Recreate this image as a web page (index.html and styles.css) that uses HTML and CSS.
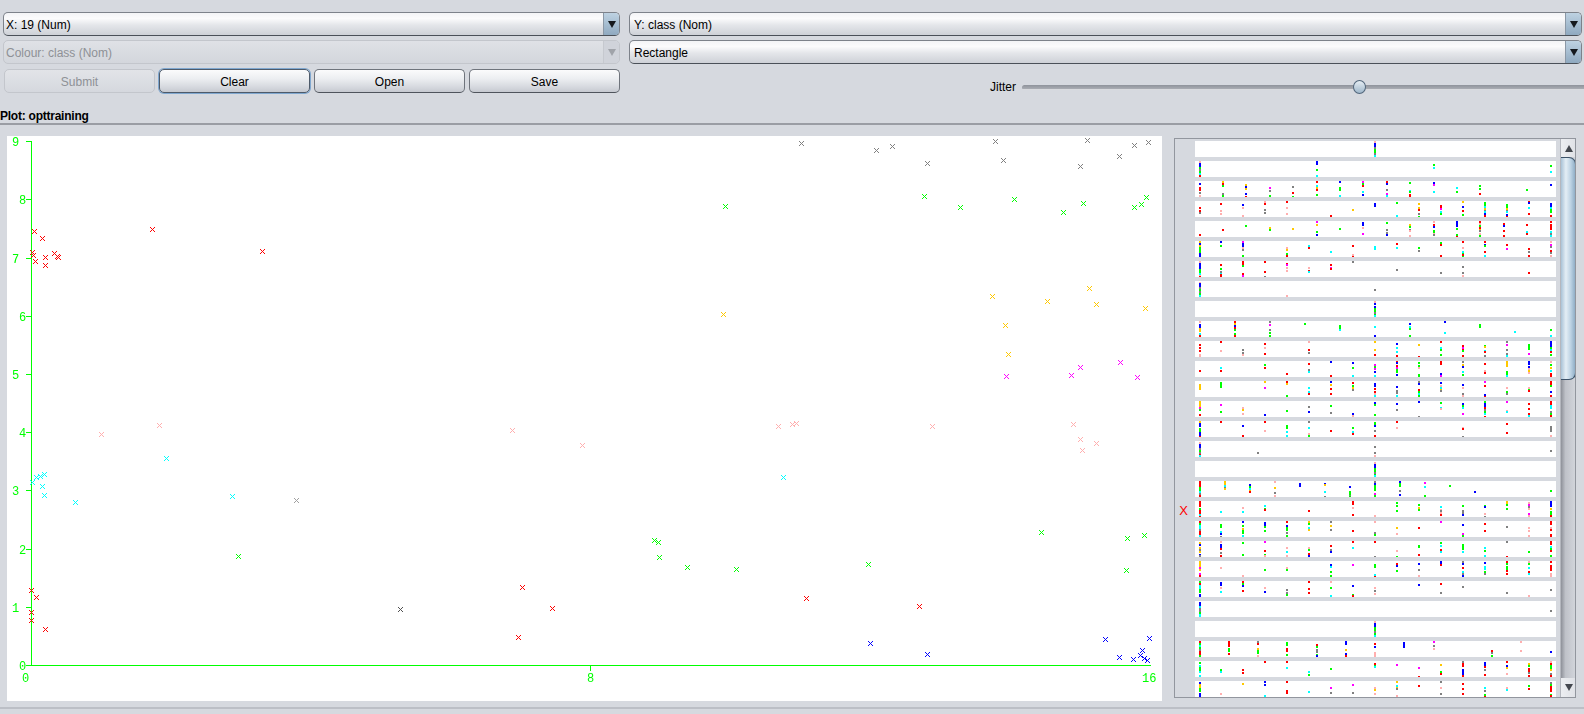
FILE: index.html
```html
<!DOCTYPE html>
<html lang="en">
<head>
    <meta charset="utf-8"/>
    <title>Visualize: opttraining</title>
    <link rel="stylesheet" href="styles.css">
</head>
<body>
<div class="controls">
    <div class="control-col left-col">
        <div class="combo"><span class="combo-text">X: 19 (Num)</span><span class="combo-arrow"></span></div>
        <div class="combo disabled"><span class="combo-text">Colour: class (Nom)</span><span class="combo-arrow"></span></div>
        <div class="button-row">
            <button class="btn" disabled>Submit</button>
            <button class="btn focused">Clear</button>
            <button class="btn">Open</button>
            <button class="btn">Save</button>
        </div>
    </div>
    <div class="control-col right-col">
        <div class="combo"><span class="combo-text">Y: class (Nom)</span><span class="combo-arrow"></span></div>
        <div class="combo"><span class="combo-text">Rectangle</span><span class="combo-arrow"></span></div>
        <div class="jitter-row">
            <span class="jitter-label">Jitter</span>
            <div class="slider"><span class="slider-thumb"></span></div>
        </div>
    </div>
</div>
<div class="plot-title">Plot: opttraining</div>
<div class="main">
    <div class="plot" id="plot">
        <canvas id="plotCanvas" width="1155" height="565"></canvas>
    </div>
    <div class="matrix">
        <div class="matrix-gutter"><span class="class-mark">X</span></div>
        <div class="matrix-rows" id="matrixRows"></div>
        <div class="scrollbar">
            <div class="scroll-btn"><span class="arrow-up"></span></div>
            <div class="scroll-track"><div class="scroll-thumb"></div></div>
            <div class="scroll-btn bottom"><span class="arrow-down"></span></div>
        </div>
    </div>
</div>
<script src="script.js"></script>
</body>
</html>
```

FILE: styles.css
```css
html {
    font-family: "Liberation Sans", Arial, sans-serif;
    font-size: 12px;
}
body {
    margin: 0;
    width: 1584px;
    height: 714px;
    overflow: hidden;
    background: #d6d9df;
    color: #000;
}

/* top controls */
.controls {
    display: flex;
    padding: 12px 0 0 3px;
    height: 81px;
}
.control-col {
    display: flex;
    flex-direction: column;
    gap: 4px;
}
.control-col > * {
    flex: none;
}
.left-col {
    width: 617px;
    margin-right: 9px;
}
.right-col {
    width: 953px;
}
.combo {
    display: flex;
    height: 24px;
    box-sizing: border-box;
    border: 1px solid #7d828a;
    border-bottom-color: #4a5058;
    border-radius: 5px;
    background: linear-gradient(#f3f4f6, #fbfbfc 25%, #e4e6ea 55%, #ced1d7);
    overflow: hidden;
}
.combo-text {
    flex: 1;
    padding-left: 2px;
    line-height: 24px;
}
.right-col .combo-text {
    padding-left: 4px;
}
.combo-arrow {
    width: 15px;
    position: relative;
    background: linear-gradient(#bed2e2, #8fa9c0);
    border-left: 1px solid #8b98a6;
}
.combo-arrow::after {
    content: "";
    position: absolute;
    left: 4px;
    top: 8px;
    border-left: 4px solid transparent;
    border-right: 4px solid transparent;
    border-top: 7px solid #15191e;
}
.combo.disabled {
    border-color: #c3c6cc;
    background: linear-gradient(#dfe1e6, #d3d6dc);
    color: #8e9196;
}
.combo.disabled .combo-arrow {
    background: #d0d3da;
    border-left-color: #c6c9cf;
}
.combo.disabled .combo-arrow::after {
    border-top-color: #a0a3a9;
}
.button-row {
    display: flex;
    gap: 4px;
    margin-top: 1px;
    padding-left: 1px;
}
.btn {
    width: 151px;
    height: 24px;
    padding: 2px 0 0;
    font: inherit;
    color: #000;
    border: 1px solid #6f747c;
    border-bottom-color: #4f545c;
    border-radius: 5px;
    background: linear-gradient(#fbfbfc, #eceef1 40%, #d4d7dd 80%, #c6c9d0);
}
.btn:disabled {
    color: #8e9196;
    border-color: #c3c6cc;
    background: linear-gradient(#e2e4e8, #d5d8de);
}
.btn.focused {
    border-color: #4d5a6a;
    box-shadow: 0 0 0 1px #7fa7cf;
}

/* jitter slider */
.jitter-row {
    display: flex;
    align-items: center;
    height: 24px;
    margin: 7px -2px 0 0;
    padding-left: 361px;
}
.jitter-label {
    width: 32px;
}
.slider {
    flex: 1;
    height: 5px;
    position: relative;
    border-radius: 3px 0 0 3px;
    background: linear-gradient(#8f939b, #a6a9b0 70%, #f2f3f5);
}
.slider-thumb {
    position: absolute;
    left: 331px;
    top: -5px;
    width: 11px;
    height: 12px;
    border: 1px solid #52677c;
    border-radius: 50%;
    background: linear-gradient(#e6edf3, #9fb7cb);
}

/* plot */
.plot-title {
    font-weight: bold;
    letter-spacing: -0.24px;
    line-height: 14px;
    height: 12px;
    margin-top: 16px;
    padding-bottom: 2px;
    border-bottom: 2px solid #9a9da4;
    box-sizing: content-box;
}
.main {
    display: flex;
    align-items: flex-start;
    padding: 11px 0 0 7px;
    height: 571px;
    border-bottom: 2px solid #bcbfc6;
}
.plot {
    position: relative;
    width: 1155px;
    height: 565px;
    background: #fff;
    flex: none;
}
.plot canvas {
    display: block;
}
.axis-label {
    position: absolute;
    font-family: "Liberation Mono", monospace;
    font-size: 12px;
    line-height: 12px;
    color: #00ff00;
}

/* attribute panel */
.matrix {
    display: flex;
    flex: none;
    width: 402px;
    height: 560px;
    box-sizing: border-box;
    margin: 2px 0 0 12px;
    border: 1px solid #92969e;
    overflow: hidden;
}
.matrix-gutter {
    width: 20px;
    flex: none;
    display: flex;
    justify-content: center;
    padding-top: 365px;
    box-sizing: border-box;
}
.class-mark {
    color: #f00;
    font-size: 13px;
    line-height: 14px;
    height: 14px;
    margin-right: 3px;
}
.matrix-rows {
    width: 361px;
    flex: none;
    display: flex;
    flex-direction: column;
    gap: 4px;
    padding-top: 2px;
}
.matrix-rows canvas {
    display: block;
    flex: none;
    background: #fff;
}
.scrollbar {
    flex: none;
    width: 16px;
    margin-left: 4px;
    display: flex;
    flex-direction: column;
    border-left: 1px solid #b4b7be;
    box-sizing: border-box;
}
.scroll-btn {
    height: 18px;
    flex: none;
    display: flex;
    align-items: center;
    justify-content: center;
    background: linear-gradient(90deg, #eceef1, #dfe1e6);
}
.scroll-btn.bottom {
    height: 19px;
}
.arrow-up {
    border-left: 4px solid transparent;
    border-right: 4px solid transparent;
    border-bottom: 7px solid #43474e;
}
.arrow-down {
    border-left: 4px solid transparent;
    border-right: 4px solid transparent;
    border-top: 7px solid #43474e;
}
.scroll-track {
    flex: 1;
    background: linear-gradient(90deg, #8e9199, #bfc2c9 30%, #d3d6dc);
}
.scroll-thumb {
    height: 223px;
    box-sizing: border-box;
    border: 1px solid #3c5268;
    border-left: none;
    border-radius: 0 7px 7px 0;
    background: linear-gradient(90deg, #a9c2d6, #e4eef5 35%, #bcd2e3 70%, #90aec7);
}
```

FILE: script.js
```javascript
var COLOURS = {
    r: '#ff0000', g: '#00ff00', b: '#0000ff', c: '#00ffff', m: '#ff00ff',
    y: '#ffc800', p: '#ffafaf', a: '#808080'
};

// scatter points in page coordinates, by colour
var SCATTER = [
    ['#808080', [[801,142],[876,149],[892,145],[927,162],[995,140],[1003,159],[1080,165],[1087,139],[1119,155],[1134,144],[1148,141]]],
    ['#00ff00', [[725,205],[924,195],[960,206],[1014,198],[1063,211],[1083,202],[1134,206],[1141,203],[1146,196]]],
    ['#ff0000', [[34,230],[42,237],[32,251],[33,254],[35,260],[45,256],[45,264],[54,252],[57,255],[58,256],[152,228],[262,250]]],
    ['#ffc800', [[723,313],[992,295],[1005,324],[1008,353],[1047,300],[1089,287],[1096,303],[1145,307]]],
    ['#ff00ff', [[1006,375],[1071,374],[1080,366],[1120,361],[1137,376]]],
    ['#ffafaf', [[101,433],[159,424],[512,429],[582,444],[778,425],[792,423],[796,422],[932,425],[1073,423],[1080,438],[1082,449],[1096,442]]],
    ['#00ffff', [[32,481],[36,476],[40,475],[44,473],[42,485],[44,494],[75,501],[166,457],[232,495],[783,476]]],
    ['#00ff00', [[238,555],[654,539],[658,541],[659,556],[687,566],[736,568],[868,563],[1041,531],[1127,537],[1144,534],[1126,569]]],
    ['#a0a0a0', [[296,499]]],
    ['#ff0000', [[31,589],[36,596],[31,611],[31,619],[45,628],[522,586],[552,607],[518,636],[806,597],[919,605]]],
    ['#505050', [[400,608]]],
    ['#0000ff', [[870,642],[927,653],[1105,638],[1149,637],[1119,656],[1133,658],[1142,649],[1140,654],[1144,657],[1147,659]]]
];

// each row: column position, then offset + colour letter for every point in it
var ROWS = [
    ['645:0p2b4b6a8g10g12a14c'],
    ['120:0p2b4b6g8a10g12c14r', '471:0b2b8g14c', '822:3g6c', '1173:4g10c'],
    ['120:2b6r8r11a14p', '189:0y2r4g12a14g', '258:3y5b7y12b15r', '330:6m9a14g', '399:5a11r15g', '471:0r4c6y8r13g', '540:0b6g8g14c', '609:0m2g4r10c13b', '681:0r2b8a12m14c', '750:1g9c10g13r15r', '822:1b3m10c', '891:6c10g', '960:4g7g12r', '1101:8g', '1173:3b'],
    ['120:6r9r11a', '183:2r9p12p', '249:3b6p14p', '315:0p2r8a11a', '381:0r6p12p', '513:14r', '579:8y', '645:2b4b', '711:1g14c', '777:2y6y8r12a15g', '843:4r6r7m10c12g', '909:0y5b9r13g', '975:1g3g5c7y9a10c12b14r', '1041:3g5g7y9a10c13b15r', '1107:0r1b6c12r', '1173:2b4b6c8g10g14r'],
    ['120:13r', '189:8r', '258:4g', '330:6y8g', '399:7y', '471:0m3y10g13b', '540:7g', '609:1b3b6p12m', '681:1g8a11a13b', '750:3y5g8a9p14p', '822:0p3r5b9g11g12p13a', '891:0b2b4b7g13g15r', '960:0r2p4g6r8y9a12p14g', '1032:2r4b9r14r', '1101:3r10c12r', '1173:0r3r5r7r10c12a14c'],
    ['120:0y2b4y6g8g10g12b14b', '183:0b4g', '249:0m2b4b6p8a14g', '381:6p8y12g14r', '447:4c6r', '513:10c', '579:4r13p15r', '645:5c7c', '711:2r6c', '777:6g9a', '843:1g3r14r', '909:0r6p10c12g13r15g', '975:0r3b4g10r14c', '1041:3r7m', '1107:7r10a14r', '1173:0p3m5a9r11a14p'],
    ['120:0p2b4b6b8g10g12c14p15r', '183:3r7g10a12c13r15r', '249:0r2r4g12r14m', '315:0r10r15a', '381:2r3m6p9p', '447:6p9r10c', '513:3r6m7r', '579:0a', '711:8a', '843:11a', '909:5a11a14p', '1107:11r'],
    ['120:1p2b4b6a8g10a12g14c', '381:14p', '645:8a'],
    ['645:0p2b5b7g9g11a13g14c'],
    ['120:0p3b5b7y9y12c14r', '225:0r2y4b6r8g12g14r', '330:0a3m8a11g14g', '435:2g', '540:4g6g8c', '645:5c14b', '750:2b5c7g14g', '855:0b11c', '960:3g5g', '1065:10c', '1173:8g14c'],
    ['120:3r6r9r13p14p', '183:0r9p', '249:8a11a13p', '315:2r6p12r', '447:0p8r11a', '645:0y8y13r', '711:2b6c10c14r', '777:3y15r', '843:0r6c8g13g', '909:4r6m8r9g14r', '975:4g5y9c10r14a', '1041:0a3m8a12a14c', '1107:3g5g7g12m', '1173:0b2b4b6g8c10r13g'],
    ['120:9r', '183:6c9r', '315:3g6r', '381:12r', '447:2r8a10c', '513:0b14r', '579:1b6g14c', '645:3m5g7m10b14c', '711:0r1b4r6m8g10g13b', '777:1g4g6p13g14g', '843:0r2r12b14m', '909:0a3y5b10c13g', '975:2r9p11r', '1041:0y2y4y10g12g14c', '1107:0b2b5b7p9y11p', '1173:0p3g6y9c12r14r'],
    ['120:3y5y7y', '183:1g3g5g', '315:0y6m', '381:0r2y14g', '447:6c10c12r', '513:0b3y7r12r', '579:1r4g6y8a', '645:2b4b7r10r12p14c', '711:5b9a11a14c', '777:0a2b8r10g12c14g', '843:1b4p6c8y9a', '909:3b6p12a14p', '975:0m4r13b15r', '1041:6p10g12a', '1107:6p8g9r', '1173:0r2r4g10b14r'],
    ['120:0y2y4y6m8g13r', '183:3m10g', '249:6p8y12p', '315:13b', '381:9g', '447:5a10b', '513:4g11a', '579:12b14p', '645:1b3g13g', '711:2b8a', '777:0b15a', '843:1g6c7p', '909:2b4g6c12m', '975:0g2b4b6r8a10g12c15r', '1041:0m9p10c', '1107:2r7r12r14c', '1173:0r2r4c6c10a12g14r'],
    ['120:0y2b4b7g9g11b13b15r', '183:0r', '249:4b14r', '315:0r9p', '381:4g6g10c14c', '447:0a6c12p14g', '513:9r', '579:6g10c12r', '645:1g3g4b9a14r', '711:0r6p', '909:6p7r15a', '1041:2r11r', '1173:5a7a9a14p'],
    ['120:1p3b5b7a9g11a13r14c', '294:11a', '645:5a11a14p', '1173:9a'],
    ['645:1p3b5b7g9g11a13g14c'],
    ['120:0r2r4r6g8g10c12a14r', '195:0y2y4c6a7y', '270:3b5g7c9y10r', '345:0p6y11a14p', '420:2b4b', '495:2b3y10c15a', '570:5b10g12g14a15g', '645:0a2b4g6g8g12m14g', '720:0b2g4g9a13b', '795:1m5c14g', '870:4g', '945:10b', '1173:9g'],
    ['120:0r2r4r7g9r11r13c15r', '183:10c', '249:6p10c', '315:4c7g8r', '447:9r', '579:0r2r6p13r', '645:14p', '711:1g4g9g', '777:3g6y8g', '843:5c8p9a11p13r', '909:4g9a11a13b', '975:4g5b12p15a', '1041:0y2y3g7g', '1107:1p3m5a7p12m14p', '1173:0b2b4b7y10g12g14r'],
    ['120:0r2g4c6c8a10r12r14c', '183:3g5g10c12b15a', '249:0b4g7y9g11g14c', '315:1b3b5g9g', '381:0r4b6g8g11a14g', '447:0y2g6c8y', '513:0a4y8a', '579:9r', '645:0p11a13g', '711:6y12p', '777:6r', '843:0m', '909:3b12m14g', '975:2r9r', '1041:5a', '1107:6p9p14p', '1173:0r2r6p8r13r14r'],
    ['120:1y3b6y8a10y13b14a', '183:0p3b5b7r11a14r', '249:1g13g', '315:0m9r13g14p', '381:6p10c14p', '447:6p8g12r14b', '513:4r8a10b', '579:0r6c', '645:0r15a', '711:9p15g', '777:4g5g13r', '843:1g4c8r10c', '909:3g5g7g10c', '975:6c9g14c', '1041:0a15r', '1107:10g', '1173:0r2r5c7g9r14g'],
    ['120:0y2y4y6m8y12m14r', '183:6p', '249:14p', '315:8g', '381:6p8g', '513:3b5c10g14g', '579:3m', '645:3g5g13c15r', '711:2r4b9g', '777:2b8a14p', '843:0b2b3r', '909:0a2b6r10c12a14b', '975:1b5c7c10g12a', '1041:0r2g5g7g9r12r', '1107:0p2g6c10r12c', '1173:0r4r6r8r12p14p'],
    ['120:0g2r4c6c8g10g13b14b', '183:1b3b6p10c', '249:0r2g4b9r', '315:6p10b', '381:8a11a13g', '447:0r7r11r', '513:0p6g14c', '579:4b13g14r', '645:6p9a12p', '777:3b', '843:2r11a', '909:5a', '1041:11a', '1107:14p', '1173:8a'],
    ['120:1b3b5c7a9a11g13c14c', '1173:9a'],
    ['645:0p2b4b6g8g10a12g14c'],
    ['120:0r2g4c6g8a10r12r14g', '207:0r2r4r7g9g12r', '294:0a2r7y9g11g14p', '381:1g3g7r9r13g', '471:3r5g8a10a13g14b', '558:0b2b8y12b14r', '645:2r5b11p13p15p', '732:1b3b5b', '822:0m4a7p', '996:9r11a14g', '1083:0p9p', '1173:10b'],
    ['120:1g4c6g8g10c14c', '183:8g10c', '249:8r11r', '315:0r', '381:0r6c', '447:10c13g', '513:7g', '645:2r4g5c', '711:3m', '777:6m15r', '843:3y10g12r', '909:0a2r4r8b10b12b14r', '975:1b3b5r8a13r', '1041:0r4b6y12p', '1107:2y4g7r9r11a14r', '1173:0p2r4g6g8y12a14r'],
    ['120:1b3y5y7g9g12b14b', '183:12p', '249:2y', '315:0b3b14c', '381:0r9r11r', '447:10c', '513:6m11a', '579:3m11a', '645:6p8y12p', '711:0y4c6y7a14p', '777:4r', '843:0a6p12a', '909:2r7r12r', '975:6c9a13g15r', '1041:6p8c', '1107:4g7r', '1173:1a3g5r7r9r13g14r']
];

function drawMark(ctx, x, y) {
    for (var i = -2; i <= 2; i++) {
        ctx.fillRect(x + i, y + i, 1, 1);
        ctx.fillRect(x + i, y - i, 1, 1);
    }
}

function addLabel(text, left, top) {
    var el = document.createElement('span');
    el.className = 'axis-label';
    el.textContent = text;
    el.style.left = (left - 7) + 'px';
    el.style.top = (top - 135) + 'px';
    document.getElementById('plot').appendChild(el);
}

function drawPlot() {
    var ctx = document.getElementById('plotCanvas').getContext('2d');
    ctx.translate(-7, -135);

    ctx.fillStyle = '#00ff00';
    ctx.fillRect(31, 140, 1, 525);
    ctx.fillRect(26, 664, 1125, 1);
    ctx.fillRect(590, 664, 1, 6);

    for (var n = 0; n <= 9; n++) {
        var tickY = Math.round(664 - n * 58.2);
        ctx.fillRect(26, tickY, 5, 1);
        addLabel(String(n), n % 2 ? 12 : 19, tickY - 4);
    }
    addLabel('0', 22, 672);
    addLabel('8', 587, 672);
    addLabel('16', 1142, 672);

    SCATTER.forEach(function (group) {
        ctx.fillStyle = group[0];
        group[1].forEach(function (p) {
            drawMark(ctx, p[0], p[1]);
        });
    });
}

function drawRows() {
    var box = document.getElementById('matrixRows');
    ROWS.forEach(function (row) {
        var canvas = document.createElement('canvas');
        canvas.width = 361;
        canvas.height = 16;
        box.appendChild(canvas);
        var ctx = canvas.getContext('2d');
        row.forEach(function (col) {
            var parts = col.split(':');
            var x = Math.round(parts[0] / 3) - 36;
            var points = parts[1].match(/\d+[a-z]/g);
            points.forEach(function (pt) {
                ctx.fillStyle = COLOURS[pt.slice(-1)];
                ctx.fillRect(x, parseInt(pt), 2, 2);
            });
        });
    });
}

drawPlot();
drawRows();
```
